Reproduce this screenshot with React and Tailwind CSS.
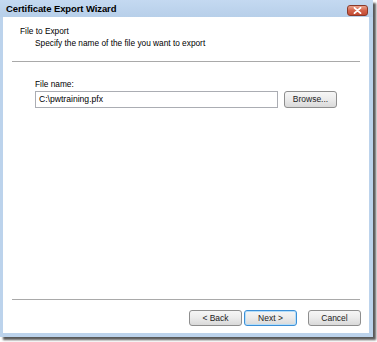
import React from "react";

function WinButton({ children, focused, width = "w-[53px]", height = "h-[16px]" }) {
  return (
    <button
      className={`flex ${height} ${width} items-center justify-center rounded-[3px] border bg-gradient-to-b from-[#f6f6f6] via-[#ebebeb] to-[#d9d9d9] text-[8.5px] leading-none text-[#222] ${
        focused ? "border-[#3c8fd6] shadow-[inset_0_0_0_1px_#b4defa]" : "border-[#8e8e8e]"
      }`}
    >
      {children}
    </button>
  );
}

export default function App() {
  return (
    <div className="h-[342px] w-[377px] bg-white font-['Liberation_Sans',Arial,sans-serif]">
      <div className="flex h-[337px] w-[373px] flex-col bg-[#bcd3ec] shadow-[3px_3px_2px_rgba(0,0,0,0.65)]">
        <div className="flex h-[17px] items-center justify-between bg-gradient-to-b from-[#c4d9f1] to-[#b7cfe9] pl-[6px] pr-[5px]">
          <span className="pt-[2px] font-['Liberation_Sans_Narrow',Arial,sans-serif] text-[9.5px] font-bold tracking-[-0.1px] text-black">
            Certificate Export Wizard
          </span>
          <div className="mt-[4px] flex h-[11px] w-[21px] items-center justify-center rounded-[3px] border border-[#8a3a2a] bg-gradient-to-b from-[#e9a38e] via-[#d4634b] to-[#c24a33]">
            <svg width="9" height="7" viewBox="0 0 9 7">
              <path d="M1.5 0.8 L7.5 6.2 M7.5 0.8 L1.5 6.2" stroke="white" strokeWidth="1.8" strokeLinecap="round" />
            </svg>
          </div>
        </div>
        <div className="ml-[3px] mr-[4px] mb-[4px] flex flex-1 flex-col bg-white">
          <div className="pl-[17px] pt-[8px] text-[8.3px] leading-[12px] text-black">
            <p>File to Export</p>
            <p className="pl-[15px]">Specify the name of the file you want to export</p>
          </div>
          <div className="mx-[9px] mt-[12px] h-px bg-[#a9a9a9]" />
          <div className="pl-[32px] pt-[16px] text-[8.3px] text-black">
            <p className="leading-[12px]">File name:</p>
            <div className="mt-[1px] flex items-center gap-[6px]">
              <div className="flex h-[17px] w-[243px] items-center border border-[#abadb3] pl-[3px] text-[8.6px]">
                C:\pwtraining.pfx
              </div>
              <WinButton height="h-[17px]">Browse...</WinButton>
            </div>
          </div>
          <div className="flex-1" />
          <div className="mx-[9px] h-px bg-[#a9a9a9]" />
          <div className="flex justify-end pr-[8px] pt-[10px] pb-[7px]">
            <div className="flex gap-[2px]">
              <WinButton>&lt; Back</WinButton>
              <WinButton focused>Next &gt;</WinButton>
            </div>
            <div className="ml-[11px]">
              <WinButton>Cancel</WinButton>
            </div>
          </div>
        </div>
      </div>
    </div>
  );
}
